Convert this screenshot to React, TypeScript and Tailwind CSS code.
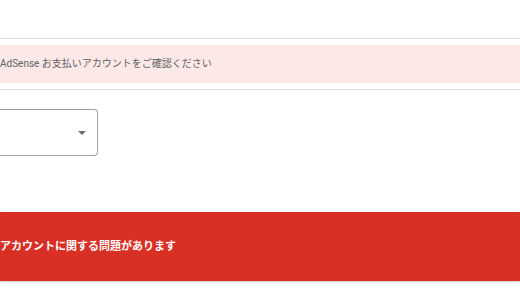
import React from "react";

export default function App() {
  return (
    <div
      className="w-[520px] h-[300px] bg-white overflow-hidden"
      style={{ fontFamily: 'Roboto, "Noto Sans CJK JP", sans-serif' }}
    >
      <div className="h-[38px]" />
      <div className="h-px bg-[#e3e3e3]" />
      <div className="h-[6px]" />
      <div className="h-[38px] bg-[#fce8e6] flex items-center">
        <span className="text-[10px] text-[#5f6368] leading-none whitespace-nowrap">
          AdSense お支払いアカウントをご確認ください
        </span>
      </div>
      <div className="h-[6px]" />
      <div className="h-px bg-[#e3e3e3]" />
      <div className="h-[19px]" />
      <div className="w-[98px] h-[47px] border border-l-0 border-[#a0a0a0] rounded-r-[4px] flex items-center justify-end pr-[11px]">
        <svg width="8" height="4" viewBox="0 0 8 4">
          <path d="M0 0 L8 0 L4 4 Z" fill="#707070" />
        </svg>
      </div>
      <div className="h-[56px]" />
      <div className="h-[69px] bg-[#d93025] flex items-center shadow-[0_1px_2px_rgba(60,64,67,0.3)]">
        <span className="text-[11px] font-bold text-white leading-none whitespace-nowrap">
          アカウントに関する問題があります
        </span>
      </div>
    </div>
  );
}
